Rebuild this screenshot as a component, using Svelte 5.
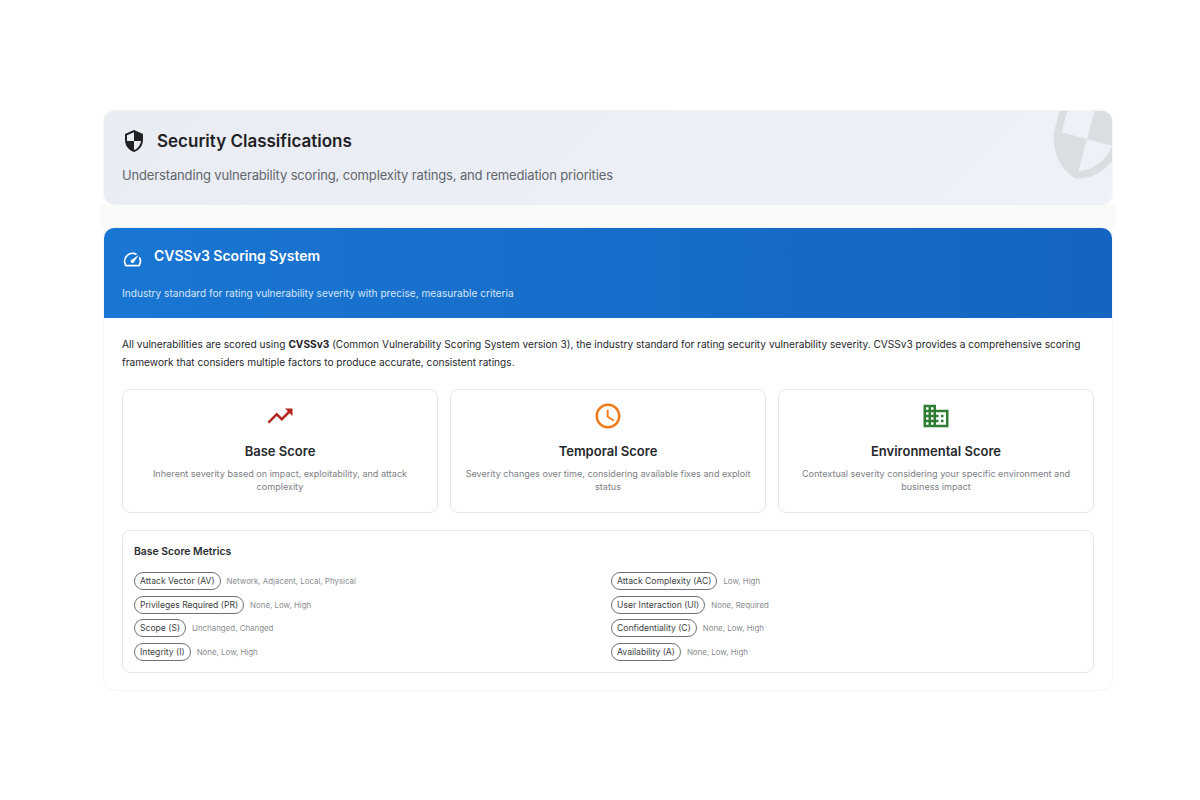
<script>
  const cards = [
    { title: 'Base Score', color: '#b3261e', desc: 'Inherent severity based on impact, exploitability, and attack complexity', d: 'M16 6l2.29 2.29-4.88 4.88-4-4L2 16.59 3.41 18l6-6 4 4 6.3-6.29L22 12V6z' },
    { title: 'Temporal Score', color: '#ef7a17', desc: 'Severity changes over time, considering available fixes and exploit status', d: 'M11.99 2C6.47 2 2 6.48 2 12s4.47 10 9.99 10C17.52 22 22 17.52 22 12S17.52 2 11.99 2zM12 20c-4.42 0-8-3.58-8-8s3.58-8 8-8 8 3.58 8 8-3.58 8-8 8zM12.5 7H11v6l5.25 3.15.75-1.23-4.5-2.67z' },
    { title: 'Environmental Score', color: '#2e7d32', desc: 'Contextual severity considering your specific environment and business impact', d: 'M12 7V3H2v18h20V7H12zM6 19H4v-2h2v2zm0-4H4v-2h2v2zm0-4H4V9h2v2zm0-4H4V5h2v2zm4 12H8v-2h2v2zm0-4H8v-2h2v2zm0-4H8V9h2v2zm0-4H8V5h2v2zm10 12h-8v-2h2v-2h-2v-2h2v-2h-2V9h8v10zm-2-8h-2v2h2v-2zm0 4h-2v2h2v-2z' }
  ];
  const metrics = [
    ['Attack Vector (AV)', 'Network, Adjacent, Local, Physical'],
    ['Attack Complexity (AC)', 'Low, High'],
    ['Privileges Required (PR)', 'None, Low, High'],
    ['User Interaction (UI)', 'None, Required'],
    ['Scope (S)', 'Unchanged, Changed'],
    ['Confidentiality (C)', 'None, Low, High'],
    ['Integrity (I)', 'None, Low, High'],
    ['Availability (A)', 'None, Low, High']
  ];
  const shield = 'M12 1 3 5v6c0 5.55 3.84 10.74 9 12 5.16-1.26 9-6.45 9-12V5l-9-4zm0 10.99h7c-.53 4.12-3.28 7.79-7 8.94V12H5V6.3l7-3.11v8.8z';
</script>

<div class="page">
  <header class="hero">
    <svg class="watermark" viewBox="0 0 24 24"><path d={shield} /></svg>
    <div class="hero-title">
      <svg class="hero-icon" viewBox="0 0 24 24"><path d={shield} /></svg>
      <h1>Security Classifications</h1>
    </div>
    <p class="hero-sub">Understanding vulnerability scoring, complexity ratings, and remediation priorities</p>
  </header>

  <div class="strip"></div>

  <section class="panel">
    <div class="panel-head">
      <div class="panel-title">
        <svg class="gauge" viewBox="0 0 24 24"><path d="m20.38 8.57-1.23 1.85a8 8 0 0 1-.22 7.58H5.07A8 8 0 0 1 15.58 6.85l1.85-1.23A10 10 0 0 0 3.35 19a2 2 0 0 0 1.72 1h13.85a2 2 0 0 0 1.74-1 10 10 0 0 0-.27-10.44zm-9.79 6.84a2 2 0 0 0 2.83 0l5.66-8.49-8.49 5.66a2 2 0 0 0 0 2.83z" /></svg>
        <h2>CVSSv3 Scoring System</h2>
      </div>
      <p class="panel-sub">Industry standard for rating vulnerability severity with precise, measurable criteria</p>
    </div>

    <div class="panel-body">
      <p class="intro">All vulnerabilities are scored using <strong>CVSSv3</strong> (Common Vulnerability Scoring System version 3), the industry standard for rating security vulnerability severity. CVSSv3 provides a comprehensive scoring framework that considers multiple factors to produce accurate, consistent ratings.</p>

      <div class="cards">
        {#each cards as c}
          <div class="card">
            <svg class="card-icon" viewBox="0 0 24 24" style="fill:{c.color}"><path d={c.d} /></svg>
            <h3>{c.title}</h3>
            <p>{c.desc}</p>
          </div>
        {/each}
      </div>

      <div class="metrics">
        <h4>Base Score Metrics</h4>
        <div class="metric-grid">
          {#each metrics as m}
            <div class="metric">
              <span class="chip">{m[0]}</span>
              <span class="values">{m[1]}</span>
            </div>
          {/each}
        </div>
      </div>
    </div>
  </section>
</div>

<style>
  :global(body) {
    margin: 0;
    background: #fff;
    font-family: Inter, "Liberation Sans", sans-serif;
  }
  .page {
    width: 1008px;
    margin: 0 0 0 104px;
    padding-top: 111px;
    box-sizing: border-box;
    height: 800px;
  }
  h1, h2, h3, h4, p { margin: 0; }

  .hero {
    position: relative;
    overflow: hidden;
    height: 93px;
    box-sizing: border-box;
    padding: 18px 18px 0;
    border-radius: 10px;
    background: linear-gradient(135deg, #e9edf3 0%, #eef1f8 100%);
    box-shadow: 0 0 2px rgba(0,0,0,.16);
  }
  .watermark {
    position: absolute;
    right: -20px;
    top: -17px;
    width: 90px;
    height: 90px;
    fill: #dadee2;
    transform: rotate(15deg);
  }
  .hero-title {
    display: flex;
    align-items: center;
    gap: 11px;
    height: 24px;
  }
  .hero-icon { width: 24px; height: 24px; fill: #1f2125; flex: none; }
  h1 { font-size: 17px; font-weight: 600; color: #1f2125; line-height: 24px; }
  .hero-sub { margin-top: 12px; font-size: 13px; letter-spacing: -0.15px; line-height: 20px; color: #62666c; }

  .strip {
    height: 24px;
    margin: 0 -5px;
    background: #fafafa;
    border-radius: 0 0 8px 8px;
  }

  .panel {
    height: 462px;
    border-radius: 10px;
    background: #fff;
    box-shadow: 0 0 2px rgba(0,0,0,.14);
    overflow: hidden;
  }
  .panel-head {
    height: 90px;
    box-sizing: border-box;
    padding: 16px 18px 0;
    background: linear-gradient(90deg, #1976d2 0%, #1565c0 100%);
    color: #fff;
  }
  .panel-title { display: flex; align-items: center; gap: 11px; height: 24px; }
  .gauge { width: 21px; height: 21px; fill: #fff; flex: none; margin-top: 6px; }
  h2 { font-size: 14px; font-weight: 600; line-height: 24px; }
  .panel-sub { margin-top: 17px; font-size: 10.13px; line-height: 16px; color: #d6e5f6; }

  .panel-body { padding: 17px 18px 0; }
  .intro { font-size: 10.15px; line-height: 18px; color: #26282c; }
  .intro strong { font-weight: 700; color: #1f2125; }

  .cards {
    display: grid;
    grid-template-columns: repeat(3, 1fr);
    gap: 12px;
    margin-top: 18px;
  }
  .card {
    height: 124px;
    box-sizing: border-box;
    padding: 11px 12px 0;
    border: 1px solid #e6e7e9;
    border-radius: 8px;
    text-align: center;
  }
  .card-icon { display: block; width: 30px; height: 30px; margin: 0 auto; }
  h3 { margin-top: 10px; font-size: 13px; font-weight: 600; line-height: 20px; color: #26282c; }
  .card p { margin-top: 6px; font-size: 9.07px; line-height: 13px; color: #7d8085; }

  .metrics {
    margin-top: 17px;
    height: 143px;
    box-sizing: border-box;
    padding: 13px 11px 0;
    border: 1px solid #e6e7e9;
    border-radius: 8px;
  }
  h4 { font-size: 10.4px; font-weight: 600; line-height: 15px; color: #2b2d31; }
  .metric-grid {
    display: grid;
    grid-template-columns: 477px 1fr;
    row-gap: 4px;
    margin-top: 12.2px;
  }
  .metric { display: flex; align-items: center; gap: 6px; height: 19.6px; }
  .chip {
    box-sizing: border-box;
    height: 18px;
    padding: 0 5px;
    border: 1px solid #6f7276;
    border-radius: 9px;
    font-size: 8.6px;
    line-height: 16px;
    color: #3c3e42;
    white-space: nowrap;
  }
  .values { font-size: 7.9px; color: #8a8d91; white-space: nowrap; }
</style>
